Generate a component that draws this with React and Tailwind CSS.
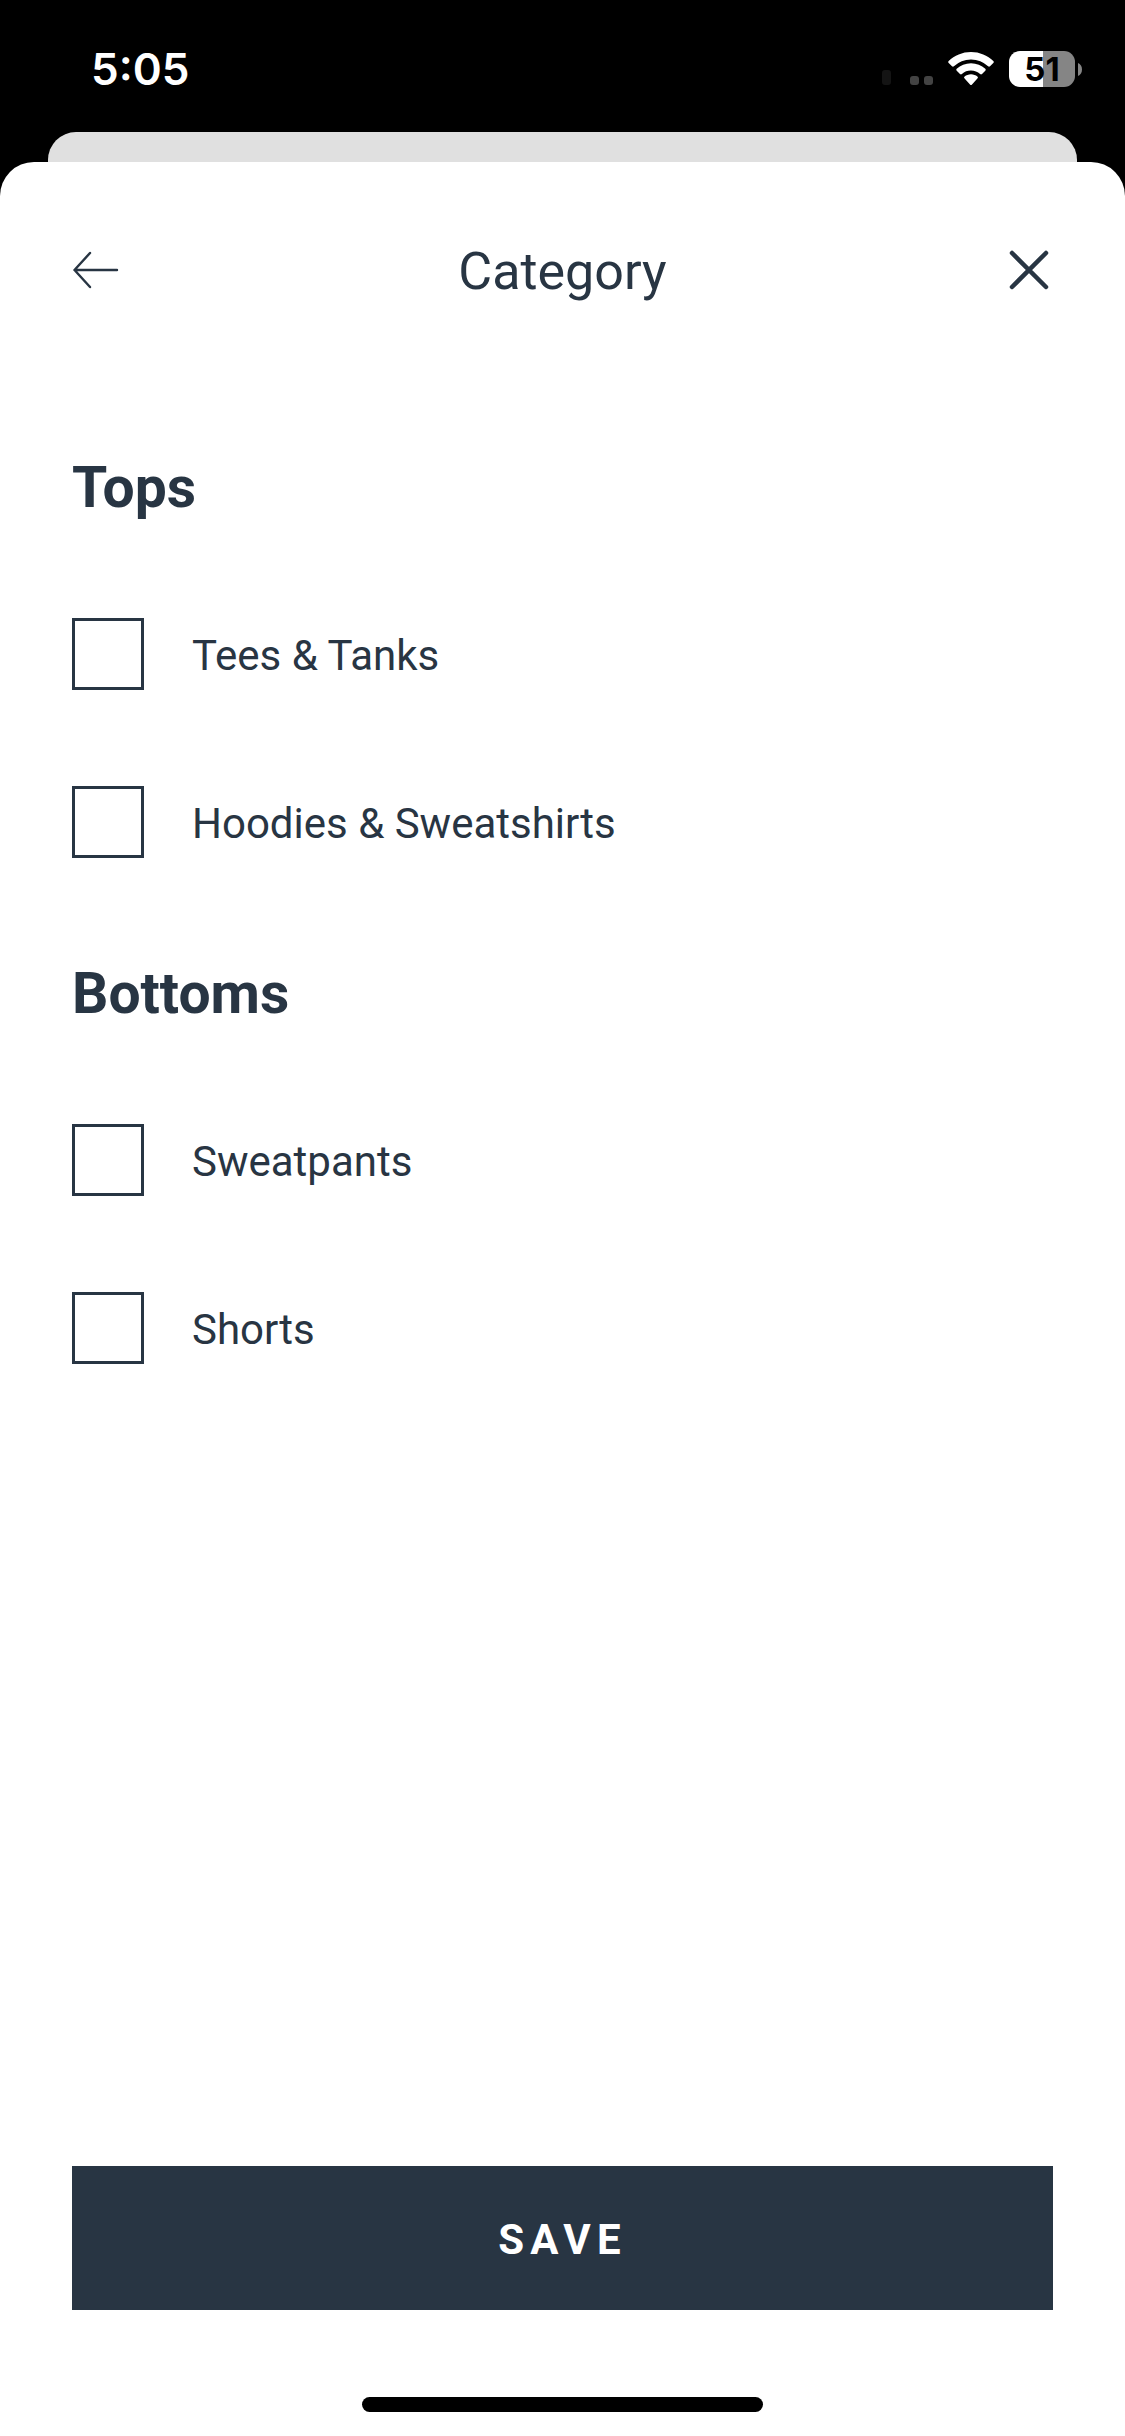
import React from "react";

const groups = [
  { title: "Tops", options: ["Tees & Tanks", "Hoodies & Sweatshirts"] },
  { title: "Bottoms", options: ["Sweatpants", "Shorts"] },
];

function StatusBar() {
  return (
    <div className="flex h-[132px] items-center justify-between pt-1.5 pr-[43px] pl-[91px] text-white">
      <time className="font-['Inter',sans-serif] text-[44px] leading-none font-semibold">5:05</time>
      <div className="flex items-center">
        <svg className="mr-[15px] h-[36px] w-[51px]" viewBox="0 0 51 36" aria-hidden="true">
          <rect x="0" y="19" width="9" height="15" rx="3" fill="#141414" />
          <rect x="28" y="25" width="9" height="9" rx="3" fill="#434343" />
          <rect x="42" y="25" width="9" height="9" rx="3" fill="#434343" />
        </svg>
        <svg className="mr-[15px] h-[36px] w-[46px]" viewBox="0 0 46 36" fill="#fff" aria-hidden="true">
          <path d="M23 1C14.400 1 6.400 4.400.700 10.100a1.400 1.400 0 0 0 0 2L4 15.300a1.400 1.400 0 0 0 1.900 0A24.500 24.500 0 0 1 23 8.400a24.500 24.500 0 0 1 17.100 6.900 1.400 1.400 0 0 0 1.900 0l3.300-3.200a1.400 1.400 0 0 0 0-2C39.600 4.400 31.600 1 23 1Z" />
          <path d="M23 12.200c-5.500 0-10.500 2.100-14.300 5.600a1.400 1.400 0 0 0 0 2l3.300 3.200a1.400 1.400 0 0 0 1.900 0A13.400 13.400 0 0 1 23 19.600c3.500 0 6.700 1.300 9.100 3.400a1.400 1.400 0 0 0 1.900 0l3.300-3.200a1.400 1.400 0 0 0 0-2C33.500 14.300 28.500 12.200 23 12.200Z" />
          <path d="M23 23.300c-2.500 0-4.700.900-6.400 2.300a1.300 1.300 0 0 0 0 2l5.400 6a1.400 1.400 0 0 0 2 0l5.400-6a1.300 1.300 0 0 0 0-2c-1.700-1.400-3.900-2.300-6.400-2.300Z" />
        </svg>
        <div className="flex h-[36px] w-[66px] items-center justify-center rounded-[11px] bg-[linear-gradient(90deg,#fff_52%,#858585_52%)] font-['Inter',sans-serif] text-[33px] leading-none font-bold text-black">
          51
        </div>
        <svg className="ml-[3px] h-[13px] w-[4px]" viewBox="0 0 4 13" aria-hidden="true">
          <path d="M0 0c2.500 1 4 3.500 4 6.500S2.500 12 0 13Z" fill="#858585" />
        </svg>
      </div>
    </div>
  );
}

function Option({ label }) {
  return (
    <label className="flex h-[168px] items-center gap-12 text-[42px] leading-none">
      <input type="checkbox" className="size-[72px] shrink-0 appearance-none border-3 border-[#283543] checked:bg-[#283543]" />
      <span className="pt-1">{label}</span>
    </label>
  );
}

export default function App() {
  return (
    <div className="flex min-h-screen flex-col bg-black font-['Roboto',sans-serif] text-[#283543]">
      <StatusBar />
      <div className="mx-12 h-[30px] rounded-t-[28px] bg-[#e0e0e0]" />
      <main className="flex flex-1 flex-col rounded-t-[34px] bg-white px-[72px]">
        <header className="flex h-[216px] items-center justify-between">
          <button type="button" aria-label="Back" className="flex w-12 items-center">
            <svg className="h-[38px] w-[48px]" viewBox="0 0 48 38" fill="none" stroke="currentColor" strokeWidth="2.4" strokeLinecap="round" strokeLinejoin="round">
              <path d="M2.500 19H45M18 2 2.500 19 18 36" />
            </svg>
          </button>
          <h1 className="pt-1 text-[52px] leading-none font-normal">Category</h1>
          <button type="button" aria-label="Close" className="flex w-12 items-center justify-end">
            <svg className="h-[42px] w-[48px]" viewBox="0 0 48 42" fill="none" stroke="currentColor" strokeWidth="4.5" strokeLinecap="round">
              <path d="M7 4 41 38M41 4 7 38" />
            </svg>
          </button>
        </header>
        <form className="flex flex-1 flex-col pt-[22px]" onSubmit={(e) => e.preventDefault()}>
          {groups.map((group) => (
            <fieldset key={group.title}>
              <legend className="flex h-[170px] items-center pt-1 text-[57px] leading-none font-bold">{group.title}</legend>
              {group.options.map((option) => (
                <Option key={option} label={option} />
              ))}
            </fieldset>
          ))}
          <button type="submit" className="mt-auto h-36 bg-[#283543] pt-1 text-[42px] leading-none font-bold tracking-[0.15em] text-white">
            SAVE
          </button>
        </form>
        <div className="mt-[87px] mb-6 h-[15px] w-[401px] self-center rounded-full bg-black" />
      </main>
    </div>
  );
}
